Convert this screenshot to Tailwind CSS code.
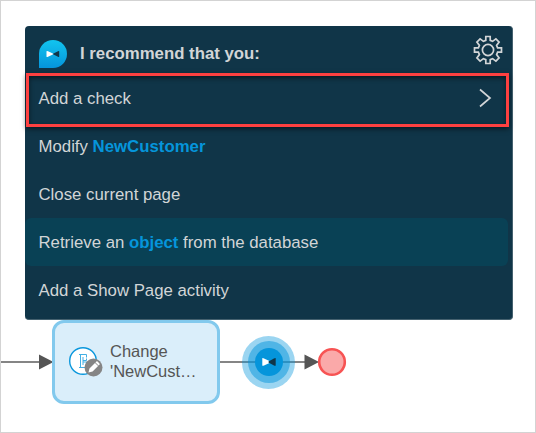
<!DOCTYPE html>
<html lang="en">
<head>
<meta charset="utf-8">
<title>Recommendations</title>
<script src="https://cdn.jsdelivr.net/npm/@tailwindcss/browser@4"></script>
</head>
<body class="bg-white">
<main class="relative w-[536px] h-[433px] overflow-hidden border border-[#d3d3d3] bg-white font-['Liberation_Sans',Arial,sans-serif]">
  <!-- Flow diagram -->
  <svg class="absolute left-[-1px] top-[-1px]" width="536" height="433" viewBox="0 0 536 433">
    <path d="M1 362H40M220 362H306" stroke="#858585" stroke-width="2"/>
    <path d="M39 354.500L53.500 362L39 369.500ZM304.500 354.500L319 362L304.500 369.500Z" fill="#555"/>
    <circle cx="268.500" cy="362.500" r="26.500" fill="#0595db" fill-opacity=".4"/>
    <circle cx="269" cy="362" r="21" fill="#0595db" fill-opacity=".5"/>
    <circle cx="269" cy="362" r="14" fill="#0595db"/>
    <path d="M262.300 358.200Q262.800 357.800 264 358.400L269.500 361L269.500 363L264 365.600Q262.300 366.200 262.300 365.400Z" fill="#fff"/>
    <path d="M275.700 358.200Q275.200 357.800 274 358.400L268.500 361.400L268.500 362.600L274 365.600Q275.700 366.200 275.700 365.400Z" fill="#103548"/>
    <circle cx="332" cy="362" r="12.800" fill="#faa9a9" stroke="#f75353" stroke-width="2.600"/>
  </svg>
  <section class="absolute left-[51px] top-[319px] w-[168px] h-[84px] rounded-xl border-3 border-[#82c9ed] bg-[#daeefa] flex items-center pl-[14px] gap-[5px]">
    <svg class="shrink-0" width="36" height="32" viewBox="0 0 36 32">
      <circle cx="14" cy="15" r="13.300" fill="#fff" stroke="#0a97dc" stroke-width="1.400"/>
      <path d="M10 8.500H17.500V11.500M11.500 8.500V21.500M10 21.500H17.500V18.500M14 11V19M14 14.500H17.500V12.500M14 16H17.500V17.500" fill="none" stroke="#42afe4" stroke-width="1"/>
      <circle cx="24.500" cy="21.500" r="9" fill="#858585"/>
      <g transform="rotate(45 24.500 21.500)" fill="#fff"><path d="M22.300 15.300Q22.300 14.400 23.200 14.400H25.800Q26.700 14.400 26.700 15.300V16.500H22.300ZM22.300 17.200H26.700V25L24.500 28.600L22.300 25Z"/></g>
    </svg>
    <p class="text-[16.5px] leading-5 text-[#555] whitespace-nowrap pb-[2px]">Change<br>'NewCust…</p>
  </section>

  <!-- Recommendation panel -->
  <section class="absolute left-[24px] top-[25px] w-[488px] h-[294px] rounded bg-[#103548] border-r border-b border-[#45616f] text-[#d2d5d7] text-[16.8px]">
    <header class="h-12 flex items-center pl-[14px] pr-[9px] pt-[8px]">
      <svg width="28" height="28" viewBox="0 0 28 28">
        <defs><linearGradient id="sky" x2="0" y2="1"><stop stop-color="#12c4ef"/><stop offset="1" stop-color="#0595db"/></linearGradient></defs>
        <path d="M0 28V14A14 14 0 1 1 14 28Z" fill="url(#sky)"/>
        <path d="M7.500 11.200Q8 10.600 9 11.200L15 14L9 16.800Q7.500 17.400 7.500 16.400Z" fill="#fff"/>
        <path d="M20.200 11.200Q20 10.600 19 11.200L13.500 14L19 16.800Q20.200 17.400 20.200 16.400Z" fill="#103548"/>
      </svg>
      <h1 class="ml-[13px] font-bold flex-1">I recommend that you:</h1>
      <svg class="mb-[8px]" width="30" height="30" viewBox="0 0 30 30" fill="none" stroke="#d2d5d7" stroke-width="1.700">
        <path d="M12.800 1.500H17.200V5.400L19.600 6.400L22.900 3.900L26.100 7.100L23.600 10.400L24.600 12.800H28.500V17.200H24.600L23.600 19.600L26.100 22.900L22.900 26.100L19.600 23.600L17.200 24.600V28.500H12.800V24.600L10.400 23.600L7.100 26.100L3.900 22.900L6.400 19.600L5.400 17.200H1.500V12.800H5.400L6.400 10.400L3.900 7.100L7.100 3.900L10.400 6.400L12.800 5.400Z"/>
        <circle cx="15" cy="15" r="5.600"/>
      </svg>
    </header>
    <ul class="w-[483px]">
      <li class="h-12 px-[13.500px] pl-[13.5px] pr-4 flex justify-between leading-[50px]"><span>Add a check</span>
        <svg class="mt-[14px]" width="14" height="20" viewBox="0 0 14 20" fill="none" stroke="#d2d5d7" stroke-width="1.700"><path d="M2 1.500L12 10L2 18.500"/></svg>
      </li>
      <li class="h-12 pl-[13.5px] leading-[50px]">Modify <b class="text-[#0595db]">NewCustomer</b></li>
      <li class="h-12 pl-[13.5px] leading-[50px]">Close current page</li>
      <li class="h-12 pl-[13.5px] leading-[50px] rounded-md bg-[#094155]">Retrieve an <b class="text-[#0595db]">object</b> from the database</li>
      <li class="h-12 pl-[13.5px] leading-[50px]">Add a Show Page activity</li>
    </ul>
    <div class="absolute left-px top-[47px] w-[483px] h-[54px] border-3 border-[#fd4040] shadow-[0_2px_5px_#0008,inset_0_2px_5px_#0008]"></div>
  </section>
</main>
</body>
</html>
